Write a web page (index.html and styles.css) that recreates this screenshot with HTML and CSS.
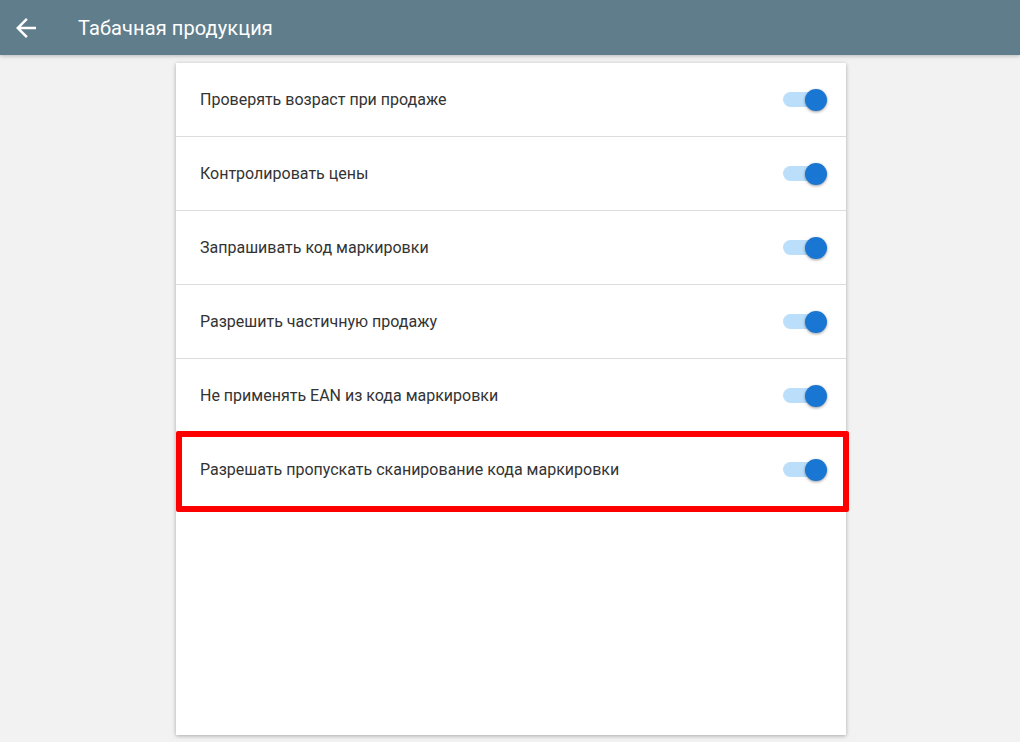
FILE: index.html
```html
<!DOCTYPE html>
<html>
<head>
    <meta charset="UTF-8">
    <title>Табачная продукция</title>
    <link rel="stylesheet" href="styles.css">
</head>
<body>
    <header class="toolbar">
        <button class="back" title="Назад">
            <svg width="30" height="30" viewBox="0 0 24 24"><path d="M20 11H7.83l5.59-5.59L12 4l-8 8 8 8 1.41-1.41L7.83 13H20v-2z" fill="#fff"/></svg>
        </button>
        <h1>Табачная продукция</h1>
    </header>

    <main class="card">
        <div class="row">
            <span>Проверять возраст при продаже</span>
            <label class="switch"><input type="checkbox" checked><span class="track"></span></label>
        </div>
        <div class="row">
            <span>Контролировать цены</span>
            <label class="switch"><input type="checkbox" checked><span class="track"></span></label>
        </div>
        <div class="row">
            <span>Запрашивать код маркировки</span>
            <label class="switch"><input type="checkbox" checked><span class="track"></span></label>
        </div>
        <div class="row">
            <span>Разрешить частичную продажу</span>
            <label class="switch"><input type="checkbox" checked><span class="track"></span></label>
        </div>
        <div class="row">
            <span>Не применять EAN из кода маркировки</span>
            <label class="switch"><input type="checkbox" checked><span class="track"></span></label>
        </div>
        <div class="row marked">
            <span>Разрешать пропускать сканирование кода маркировки</span>
            <label class="switch"><input type="checkbox" checked><span class="track"></span></label>
        </div>
    </main>
</body>
</html>
```

FILE: styles.css
```css
html, body {
    height: 100%;
}

body {
    margin: 0;
    background-color: #f2f2f2;
    font-family: Roboto, "Liberation Sans", sans-serif;
    color: #333;
    display: flex;
    flex-direction: column;
    overflow: hidden;
}

.toolbar {
    height: 55px;
    flex-shrink: 0;
    background-color: #607d8b;
    display: flex;
    align-items: center;
    box-shadow: 0 1px 4px rgba(0, 0, 0, 0.25);
    position: relative;
    z-index: 1;
}

.back {
    background: none;
    border: none;
    padding: 0;
    margin-left: 11px;
    width: 30px;
    height: 30px;
    cursor: pointer;
}

.back svg {
    display: block;
}

h1 {
    margin: 0 0 0 37px;
    font-size: 20px;
    font-weight: 400;
    color: #fff;
    letter-spacing: 0.1px;
}

.card {
    width: 670px;
    margin: 8px 0 7px 176px;
    flex: 1;
    background-color: #fff;
    box-shadow: 0 1px 4px rgba(0, 0, 0, 0.3);
}

.row {
    height: 73px;
    display: flex;
    align-items: center;
    justify-content: space-between;
    padding: 0 19px 0 24px;
    border-bottom: 1px solid #dcdcdc;
    font-size: 16px;
    position: relative;
}

.row.marked {
    border-bottom: none;
}

.row.marked::after {
    content: "";
    position: absolute;
    left: 0;
    right: -3px;
    top: -2px;
    bottom: -6px;
    border: 6px solid #f00;
    border-radius: 2px;
}

.switch {
    position: relative;
    width: 46px;
    height: 24px;
    display: flex;
    align-items: center;
}

.switch input {
    display: none;
}

.track {
    display: block;
    width: 40px;
    height: 15px;
    border-radius: 8px;
    background-color: #bbdefb;
    margin-left: 2px;
}

.track::after {
    content: "";
    position: absolute;
    right: 0;
    top: 1px;
    width: 22px;
    height: 22px;
    border-radius: 50%;
    background-color: #1976d2;
    box-shadow: 0 1px 3px rgba(0, 0, 0, 0.4);
}
```
